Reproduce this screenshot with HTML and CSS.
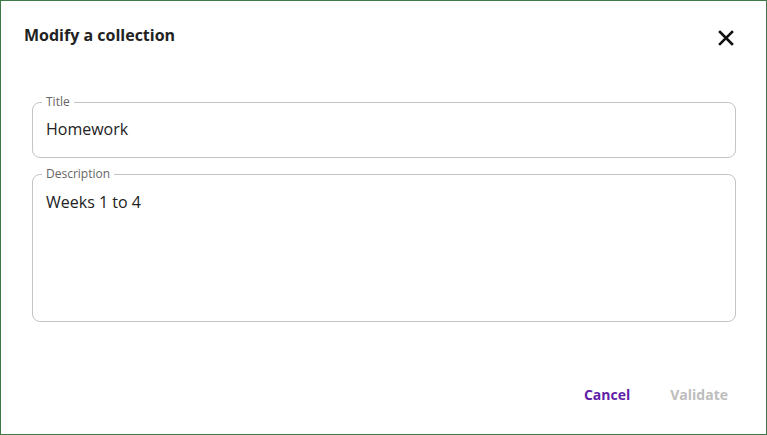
FILE: index.html
```html
<!DOCTYPE html>
<html>
<head>
<meta charset="utf-8">
<link rel="stylesheet" href="styles.css">
</head>
<body>
<div class="dialog">
  <div class="dialog-header">
    <h2 class="dialog-title">Modify a collection</h2>
    <button class="close-btn" aria-label="Close">
      <svg width="16" height="16" viewBox="0 0 16 16"><path d="M2 2 L14 14 M14 2 L2 14" stroke="#111" stroke-width="2.6" stroke-linecap="square"/></svg>
    </button>
  </div>
  <div class="dialog-body">
    <fieldset class="field field-title">
      <legend class="field-label">Title</legend>
      <div class="field-value">Homework</div>
    </fieldset>
    <fieldset class="field field-desc">
      <legend class="field-label">Description</legend>
      <div class="field-value">Weeks 1 to 4</div>
    </fieldset>
  </div>
  <div class="dialog-footer">
    <button class="btn btn-cancel">Cancel</button>
    <button class="btn btn-validate">Validate</button>
  </div>
</div>
</body>
</html>
```
FILE: styles.css
```css
html, body {
  margin: 0;
  padding: 0;
  background: #fff;
}
body {
  font-family: "Open Sans", "Liberation Sans", sans-serif;
  color: #222;
}
.dialog {
  box-sizing: border-box;
  width: 767px;
  height: 435px;
  border: 1px solid #3d7a48;
  display: flex;
  flex-direction: column;
}
.dialog-header {
  display: flex;
  align-items: flex-start;
  justify-content: space-between;
  padding: 23px 32px 0 23px;
  height: 23px;
}
.dialog-title {
  margin: 0;
  font-size: 16px;
  font-weight: 700;
  color: #222;
  line-height: 22px;
}
.close-btn {
  border: 0;
  background: none;
  padding: 0;
  width: 16px;
  height: 16px;
  display: flex;
  margin-top: 6px;
}
.dialog-body {
  display: flex;
  flex-direction: column;
  gap: 9px;
  padding: 0 30px 0 31px;
  margin-top: 48px;
}
.field {
  margin: 0;
  border: 1px solid #c4c4c4;
  border-radius: 8px;
  padding: 0 13px;
  box-sizing: border-box;
}
.field-title {
  height: 63px;
}
.field-desc {
  height: 155px;
}
.field-label {
  font-size: 12px;
  color: #666;
  padding: 0 4px;
  margin-left: -4px;
  line-height: 14px;
}
.field-value {
  font-size: 16px;
  line-height: 22px;
  color: #222;
  padding-top: 9px;
}
.field-desc .field-value {
  padding-top: 10px;
}
.dialog-footer {
  margin-top: auto;
  display: flex;
  justify-content: flex-end;
  gap: 8px;
  padding: 0 22px 25px 0;
}
.btn {
  border: 0;
  background: none;
  font-family: "Open Sans", "Liberation Sans", sans-serif;
  font-size: 14px;
  font-weight: 700;
  padding: 4px 16px;
  line-height: 20px;
}
.btn-cancel {
  color: #5f1fa8;
}
.btn-validate {
  color: #bdbdbd;
}
```
